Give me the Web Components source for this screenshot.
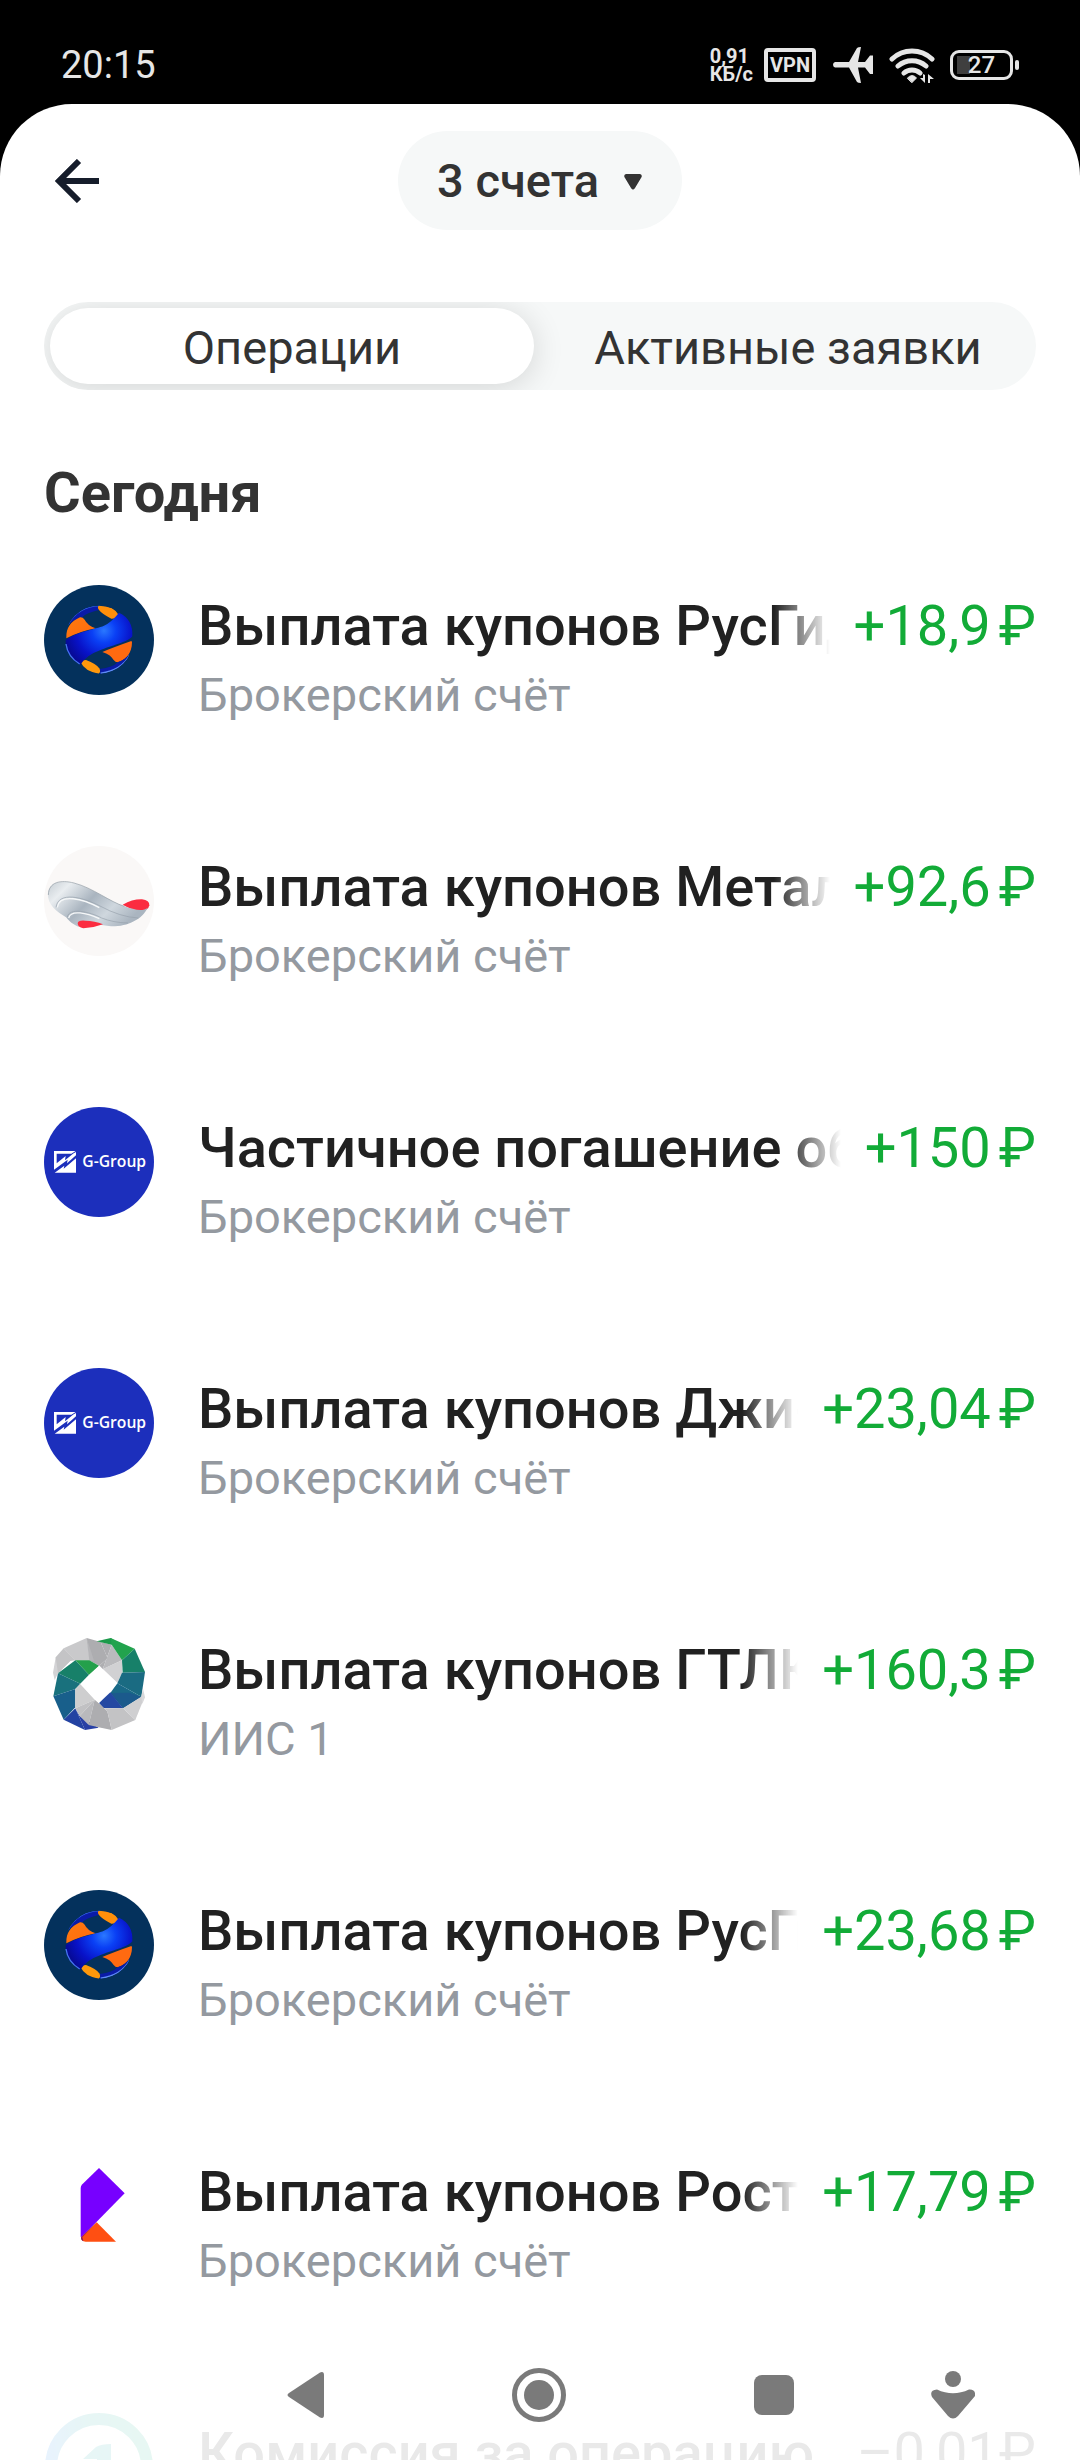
<!DOCTYPE html>
<html lang="ru">
<head>
<meta charset="utf-8">
<meta name="viewport" content="width=device-width, initial-scale=1">
<title>Операции</title>
<style>
  :root { --ink: #333; --title: #212121; --muted: #9499a0; --green: #12ab37; --soft: #f6f8f8; --edge: 44px; }
  html, body { margin: 0; height: 100%; background: #000; font-family: Roboto, "Noto Sans", sans-serif; }
</style>
</head>
<body>
<phone-screen>
  <status-bar slot="status" time="20:15" speed="0,91" battery="27"></status-bar>
  <account-header></account-header>
  <segment-tabs></segment-tabs>
  <operation-day label="Сегодня">
    <operation-row logo="rushydro" name="Выплата купонов РусГидро" account="Брокерский счёт" amount="+18,9"></operation-row>
    <operation-row logo="metal" name="Выплата купонов Металлоинвест" account="Брокерский счёт" amount="+92,6"></operation-row>
    <operation-row logo="ggroup" name="Частичное погашение облигаций" account="Брокерский счёт" amount="+150"></operation-row>
    <operation-row logo="ggroup" name="Выплата купонов Джи-групп" account="Брокерский счёт" amount="+23,04"></operation-row>
    <operation-row logo="gtlk" name="Выплата купонов ГТЛК" account="ИИС 1" amount="+160,3"></operation-row>
    <operation-row logo="rushydro" name="Выплата купонов РусГидро" account="Брокерский счёт" amount="+23,68"></operation-row>
    <operation-row logo="rostelecom" name="Выплата купонов Ростелеком" account="Брокерский счёт" amount="+17,79"></operation-row>
    <operation-row logo="fee" name="Комиссия за операцию" account="Брокерский счёт" amount="–0,01"></operation-row>
  </operation-day>
  <system-nav slot="nav"></system-nav>
</phone-screen>

<script>
const logos = {
  rushydro: `<svg viewBox="42 45 330 330" aria-hidden="true">
    <defs>
      <radialGradient id="band" gradientUnits="userSpaceOnUse" cx="222" cy="182" r="120"><stop offset="0" stop-color="#2a78ff"/><stop offset=".3" stop-color="#0a40f5"/><stop offset=".7" stop-color="#0812c8"/><stop offset="1" stop-color="#070a96"/></radialGradient>
      <linearGradient id="or" x1="0" y1="0" x2="1" y2="1"><stop offset="0" stop-color="#ff7a10"/><stop offset="1" stop-color="#ff6a0c"/></linearGradient>
      <clipPath id="ball"><circle cx="207" cy="209" r="102"/></clipPath>
    </defs>
    <circle cx="207" cy="210" r="165" fill="#04315c"/>
    <g clip-path="url(#ball)">
      <path d="M112 168Q140 106 212 107Q200 112 207 120Q165 130 158 141Q130 148 112 168Z" fill="#0a1ba8"/>
      <path d="M114 164Q145 108 212 107" fill="none" stroke="#3d6ff0" stroke-width="4"/>
      <path d="M206 107Q250 105 266 135Q262 146 244 146Q216 132 207 120Q201 112 206 107Z" fill="#ff8f0a"/>
      <path d="M109 202Q108 160 150 142Q158 141 164 149Q172 166 197 175Q150 184 109 205Z" fill="url(#or)"/>
      <path d="M306 216Q306 262 263 277Q256 277 251 270Q242 254 217 246Q250 232 304 213Z" fill="#ff6a10"/>
      <path d="M152 277Q156 270 168 270Q200 282 209 296Q213 305 206 311Q164 304 152 277Z" fill="#ff980c"/>
      <path d="M301 250Q280 302 208 313Q213 303 209 297Q248 292 263 277Q286 270 301 250Z" fill="#0a1ba8"/>
      <path d="M299 256Q276 300 212 310" fill="none" stroke="#5f8df5" stroke-width="5"/>
    </g>
    <path d="M107 211C135 185 198 178 222 167Q244 157 267 128Q310 148 307 199C296 216 240 228 210 241Q170 255 151 284Q105 258 107 211Z" fill="url(#band)"/>
    <path d="M108 222Q113 260 149 282" fill="none" stroke="#4776ee" stroke-width="4"/>
  </svg>`,
  metal: `<svg viewBox="42 48 330 330" aria-hidden="true">
    <defs><linearGradient id="wing" x1="0" y1="0" x2="1" y2=".45"><stop offset="0" stop-color="#c5cdd3"/><stop offset=".2" stop-color="#e9edf0"/><stop offset=".5" stop-color="#a9b4bf"/><stop offset=".75" stop-color="#cfd7de"/><stop offset="1" stop-color="#aab5c0"/></linearGradient></defs>
    <circle cx="207" cy="213" r="165" fill="#faf8f7"/>
    <path d="M278 224Q308 207 336 208Q359 211 358 226Q355 244 325 243Q300 238 278 224Z" fill="#fb2c40"/>
    <path d="M54 190C57 158 90 149 130 159C190 174 240 216 283 229C312 239 338 246 353 233C337 268 292 290 243 289C200 284 172 276 145 290C120 280 112 265 108 262C80 245 52 225 54 190Z" fill="url(#wing)"/>
    <path d="M82 232C88 188 160 207 208 233M116 264C122 238 170 249 208 266" fill="none" stroke="#f6f8f9" stroke-width="4"/>
    <path d="M78 232C85 182 160 202 210 228Q270 261 325 264M112 262C115 231 180 245 215 264Q250 278 294 279" fill="none" stroke="#97a2ac" stroke-width="2"/>
    <path d="M55 195C56 155 92 149 132 159C190 174 240 216 283 229" fill="none" stroke="#8f9aa3" stroke-width="2"/>
    <path d="M143 280Q144 270 166 272Q194 272 219 283Q190 294 160 295Q143 292 143 280Z" fill="#fb2c40"/>
  </svg>`,
  ggroup: `<svg viewBox="42 51 330 330" role="img" aria-label="G-Group">
    <circle cx="207" cy="216" r="165" fill="#1c2fbc"/>
    <path fill="#fff" d="M72 183H137L124 191H80V220L107 198L105 211L131 190L138 186V196L111 220L113 209L72 239ZM138 205V248H74L103 227L101 236Z"/>
    <text x="157" y="232" font-family="Open Sans, Noto Sans, sans-serif" font-weight="600" font-size="47" fill="#fff">G-Group</text>
  </svg>`,
  gtlk: `<svg viewBox="42 27 330 330" aria-hidden="true">
    <path d="M69 158L77 112L121 122L84 160L74 180Z" fill="#d3d3d5"/>
    <path d="M77 112L101 85L136 121L121 123L84 160Z" fill="#c4c4c6"/>
    <path d="M101 85L170 54L180 122H136Z" fill="#c9c9cb"/>
    <path d="M170 54L212 66L233 115L208 137L180 122Z" fill="#adadb0"/>
    <path d="M170 54L192 122H178Z" fill="#b6b6b9"/>
    <path d="M212 66L245 74L218 148L208 137L233 115Z" fill="#aeaeb1"/>
    <path d="M245 74L276 121L228 143L218 148Z" fill="#bababd"/>
    <path d="M276 121V158L262 188L218 147Z" fill="#d1d1d3"/>
    <path d="M200 64L242 54L267 70L245 74Z" fill="#1c9a4b"/>
    <path d="M242 54L314 86L276 121L245 74Z" fill="#22a34d"/>
    <path d="M314 86L345 156L278 158L276 121Z" fill="#178069"/>
    <path d="M276 158L345 156L334 230L262 190Z" fill="#1a6b82"/>
    <path d="M262 190L334 230L279 265L241 219Z" fill="#196987"/>
    <path d="M241 219L298 218L334 230L279 265Z" fill="#1b5a8c"/>
    <path d="M241 217L279 265L220 264L207 249Z" fill="#2448a2"/>
    <path d="M136 121H178L207 137L177 164Z" fill="#24a04b"/>
    <path d="M136 121L177 164L151 191L84 160Z" fill="#178069"/>
    <path d="M84 160L151 191L136 207L70 229Z" fill="#19717d"/>
    <path d="M70 229L136 207V262L101 299Z" fill="#185f8b"/>
    <path d="M101 299L136 265L165 330Z" fill="#2342a2"/>
    <path d="M136 265L149 288L206 323L165 330Z" fill="#2840a5"/>
    <path d="M136 207L151 192L194 239L136 265Z" fill="#cececf"/>
    <path d="M136 265L194 239L149 288Z" fill="#c1c1c3"/>
    <path d="M149 288L194 239L176 315Z" fill="#b9b9bc"/>
    <path d="M176 315L194 239L206 249L232 274L245 330L206 322Z" fill="#adadb0"/>
    <path d="M206 249L222 265L279 265L316 300L245 330L232 274Z" fill="#c3c3c5"/>
    <path d="M279 265L334 230L344 230L316 300Z" fill="#cfcfd1"/>
    <path d="M334 230L339 206L345 232L337 252Z" fill="#d8d8da"/>
    <path d="M208 137L262 190L206 249L151 192Z" fill="#fff"/>
  </svg>`,
  rostelecom: `<svg viewBox="42 33 330 330" aria-hidden="true">
    <path d="M207 84L284 160L156 290Q152 294 152 288V144Q152 138 157 133Z" fill="#7700ff"/>
    <path d="M200 247L258 305H167Q153 305 153 292Z" fill="#ff4f12"/>
    <path d="M200 247L153 293Q153 300 160 304L157 292Z" fill="#7a1460"/>
  </svg>`,
  fee: `<svg viewBox="0 0 110 110" aria-hidden="true">
    <defs><linearGradient id="ring" x1="0" y1=".5" x2="1" y2=".4"><stop offset="0" stop-color="#1585e8"/><stop offset=".4" stop-color="#12a09e"/><stop offset="1" stop-color="#12b184"/></linearGradient></defs>
    <circle cx="55" cy="55" r="48" fill="none" stroke="url(#ring)" stroke-width="12"/>
    <path d="M67 78H53V47H39L52 35Q57 32 67 32Z" fill="#12a09e"/>
  </svg>`
};

class PhoneScreen extends HTMLElement {
  constructor() {
    super();
    this.attachShadow({ mode: 'open' }).innerHTML = `
<style>
  :host { display: flex; flex-direction: column; height: 100vh; position: relative; overflow: hidden; }
  main { flex: 1; min-height: 0; overflow: hidden; background: #fff; border-radius: 72px 72px 0 0; padding-top: 27px; }
</style>
<slot name="status"></slot>
<main><slot></slot></main>
<slot name="nav"></slot>`;
  }
}

class StatusBar extends HTMLElement {
  connectedCallback() {
    this.attachShadow({ mode: 'open' }).innerHTML = `
<style>
  :host { display: flex; align-items: center; justify-content: space-between; height: 104px; box-sizing: border-box; padding: 26px 61px 0; color: #e6e6e6; }
  time { font-size: 38px; line-height: 44px; font-weight: 400; }
  .icons { display: flex; align-items: center; }
  .speed { font-size: 20px; line-height: 18px; font-weight: 700; margin-right: 11px; }
  .speed span { display: block; }
  .vpn { box-sizing: border-box; width: 52px; height: 34px; border: 4px solid; border-radius: 4px; font-size: 20px; line-height: 26px; font-weight: 700; text-align: center; margin-right: 17px; }
  svg { display: block; }
  .plane { margin-right: 16px; }
  .wifi { margin-right: 15px; }
  .battery { box-sizing: border-box; width: 63px; height: 30px; border: 3px solid; border-radius: 9px; font-size: 24px; line-height: 24px; font-weight: 500; text-align: center; background: linear-gradient(#3f3f3f, #3f3f3f) 4px center / 13px 18px no-repeat; }
  .nub { width: 4px; height: 10px; border-radius: 2px; background: #e6e6e6; margin-left: 2px; }
</style>
<time>${this.getAttribute('time')}</time>
<div class="icons">
  <div class="speed"><span>${this.getAttribute('speed')}</span><span>КБ/с</span></div>
  <div class="vpn">VPN</div>
  <svg class="plane" width="40" height="36" viewBox="0 0 40 36" fill="currentColor"><path d="M2 15H16L24 1Q25 0 28 0L25 15H32L37 8.500H40V27H37L32 20.500H25L28 36Q25 36 24 35L16 20.500H2Q0 20 0 17.800Q0 15.500 2 15Z"/></svg>
  <svg class="wifi" width="46" height="36" viewBox="0 0 46 36" fill="none" stroke="currentColor" stroke-width="5" stroke-linecap="round"><path d="M3 12A29 29 0 0 1 43 12M9 19A21 21 0 0 1 37 19M15 26A12 12 0 0 1 31 26"/><path d="M18.500 31Q23 26 27.500 31L23 35.500Z" fill="currentColor" stroke-width="1"/><path d="M36 28V36L31 31H34V27ZM39 36V27L45 32H41V36Z" fill="currentColor" stroke="none"/></svg>
  <div class="battery">${this.getAttribute('battery')}</div><div class="nub"></div>
</div>`;
  }
}

class AccountHeader extends HTMLElement {
  constructor() {
    super();
    this.attachShadow({ mode: 'open' }).innerHTML = `
<style>
  :host { display: grid; grid-template-columns: 1fr auto 1fr; align-items: center; padding: 0 var(--edge); }
  button { justify-self: start; width: 66px; height: 66px; padding: 0 0 0 11px; border: 0; background: none; }
  svg { display: block; }
  label { position: relative; color: var(--ink); }
  select { appearance: none; height: 99px; padding: 0 83px 0 39px; border: 0; border-radius: 50px; background: var(--soft); color: inherit; font: 500 47px/56px Roboto, sans-serif; }
  label svg { position: absolute; right: 40px; top: 43px; pointer-events: none; }
</style>
<button aria-label="Назад"><svg width="44" height="44" viewBox="0 0 44 44" fill="none" stroke="#161d2b" stroke-width="6"><path d="M24 2L4 22L24 42M4 22H44"/></svg></button>
<label><select aria-label="Счета"><option>3 счета</option></select><svg width="18" height="16" viewBox="0 0 18 16"><path d="M2 0H16Q19 1 17 4L11 14Q9 17 7 14L1 4Q-1 1 2 0Z" fill="#333"/></svg></label>`;
  }
}

class SegmentTabs extends HTMLElement {
  constructor() {
    super();
    this.attachShadow({ mode: 'open' }).innerHTML = `
<style>
  :host { display: grid; grid-template-columns: 1fr 1fr; margin: 72px var(--edge) 0; height: 88px; border-radius: 44px; background: var(--soft); overflow: hidden; }
  button { margin: 6px; padding: 4px 0 0; border: 0; border-radius: 38px; background: none; color: var(--ink); font: 400 47px/56px Roboto, sans-serif; }
  button[aria-selected="true"] { background: #fff; box-shadow: 0 4px 32px rgba(0, 0, 0, .14); }
</style>
<button role="tab" aria-selected="true">Операции</button>
<button role="tab" aria-selected="false">Активные заявки</button>`;
    const tabs = this.shadowRoot.querySelectorAll('button');
    tabs.forEach((tab) => tab.addEventListener('click', () => {
      tabs.forEach((other) => other.setAttribute('aria-selected', other === tab));
    }));
  }
  connectedCallback() {
    this.setAttribute('role', 'tablist');
  }
}

class OperationDay extends HTMLElement {
  connectedCallback() {
    this.attachShadow({ mode: 'open' }).innerHTML = `
<style>
  :host { display: block; padding: 71px var(--edge) 0; }
  h2 { margin: 0 0 60px; color: var(--ink); font-size: 56px; line-height: 64px; font-weight: 700; }
  .list { display: flex; flex-direction: column; gap: 123px; }
</style>
<h2>${this.getAttribute('label')}</h2>
<div class="list"><slot></slot></div>`;
  }
}

class OperationRow extends HTMLElement {
  connectedCallback() {
    const amount = this.getAttribute('amount');
    const root = this.attachShadow({ mode: 'open' });
    root.innerHTML = `
<style>
  :host { display: block; }
  a { display: grid; grid-template-columns: 110px minmax(0, 1fr); column-gap: 44px; align-items: start; color: inherit; text-decoration: none; }
  svg { display: block; width: 110px; height: 110px; }
  .text { padding-top: 9px; }
  .line { display: flex; gap: 24px; font-size: 56px; line-height: 64px; }
  .name { flex: 1; min-width: 0; overflow: hidden; white-space: nowrap; color: var(--title); font-weight: 500; }
  .name.clipped { -webkit-mask-image: linear-gradient(to left, transparent, #000 56px); mask-image: linear-gradient(to left, transparent, #000 56px); }
  .amount { color: var(--green); white-space: nowrap; }
  .amount span { margin-left: 8px; }
  .amount.out { color: var(--title); }
  .amount.out span { margin-left: 0; }
  .account { margin-top: 9px; color: var(--muted); font-size: 47px; line-height: 56px; }
</style>
<a href="#">
  ${logos[this.getAttribute('logo')]}
  <div class="text">
    <div class="line"><div class="name">${this.getAttribute('name')}</div><div class="amount${amount[0] === '+' ? '' : ' out'}">${amount}<span>₽</span></div></div>
    <div class="account">${this.getAttribute('account')}</div>
  </div>
</a>`;
    // only names that do not fit fade out at the end
    const name = root.querySelector('.name');
    new ResizeObserver(() => {
      name.classList.toggle('clipped', name.scrollWidth > name.clientWidth);
    }).observe(name);
  }
}

class SystemNav extends HTMLElement {
  constructor() {
    super();
    this.attachShadow({ mode: 'open' }).innerHTML = `
<style>
  :host { position: absolute; left: 0; right: 0; bottom: 0; display: grid; grid-template-columns: 189fr 233fr 234fr 235fr 123fr 66fr; height: 130px; background: rgba(255, 255, 255, .9); }
  button { padding: 0; border: 0; background: none; display: grid; place-items: center; }
  button:first-of-type { grid-column: 2; }
  svg { display: block; fill: #7a7a7a; }
</style>
<button aria-label="Назад"><svg width="38" height="48" viewBox="0 0 38 48"><path d="M33 1.500Q37 0 37 4V44Q37 48 33 46.500L2 26Q-1 24 2 22Z"/></svg></button>
<button aria-label="Домой"><svg width="54" height="54" viewBox="0 0 54 54"><circle cx="27" cy="27" r="24.500" fill="none" stroke="#7a7a7a" stroke-width="5"/><circle cx="27" cy="27" r="15"/></svg></button>
<button aria-label="Недавние"><svg width="40" height="40" viewBox="0 0 40 40"><rect width="40" height="40" rx="8"/></svg></button>
<button aria-label="Специальные возможности"><svg width="44" height="48" viewBox="0 0 44 48"><circle cx="22" cy="8" r="8"/><path d="M6 18.500Q22 26 38 18.500Q45 18 44 25L27 45Q22 50 17 45L1 26Q-2 19 6 18.500Z"/></svg></button>`;
  }
}

customElements.define('phone-screen', PhoneScreen);
customElements.define('status-bar', StatusBar);
customElements.define('account-header', AccountHeader);
customElements.define('segment-tabs', SegmentTabs);
customElements.define('operation-day', OperationDay);
customElements.define('operation-row', OperationRow);
customElements.define('system-nav', SystemNav);
</script>
</body>
</html>
